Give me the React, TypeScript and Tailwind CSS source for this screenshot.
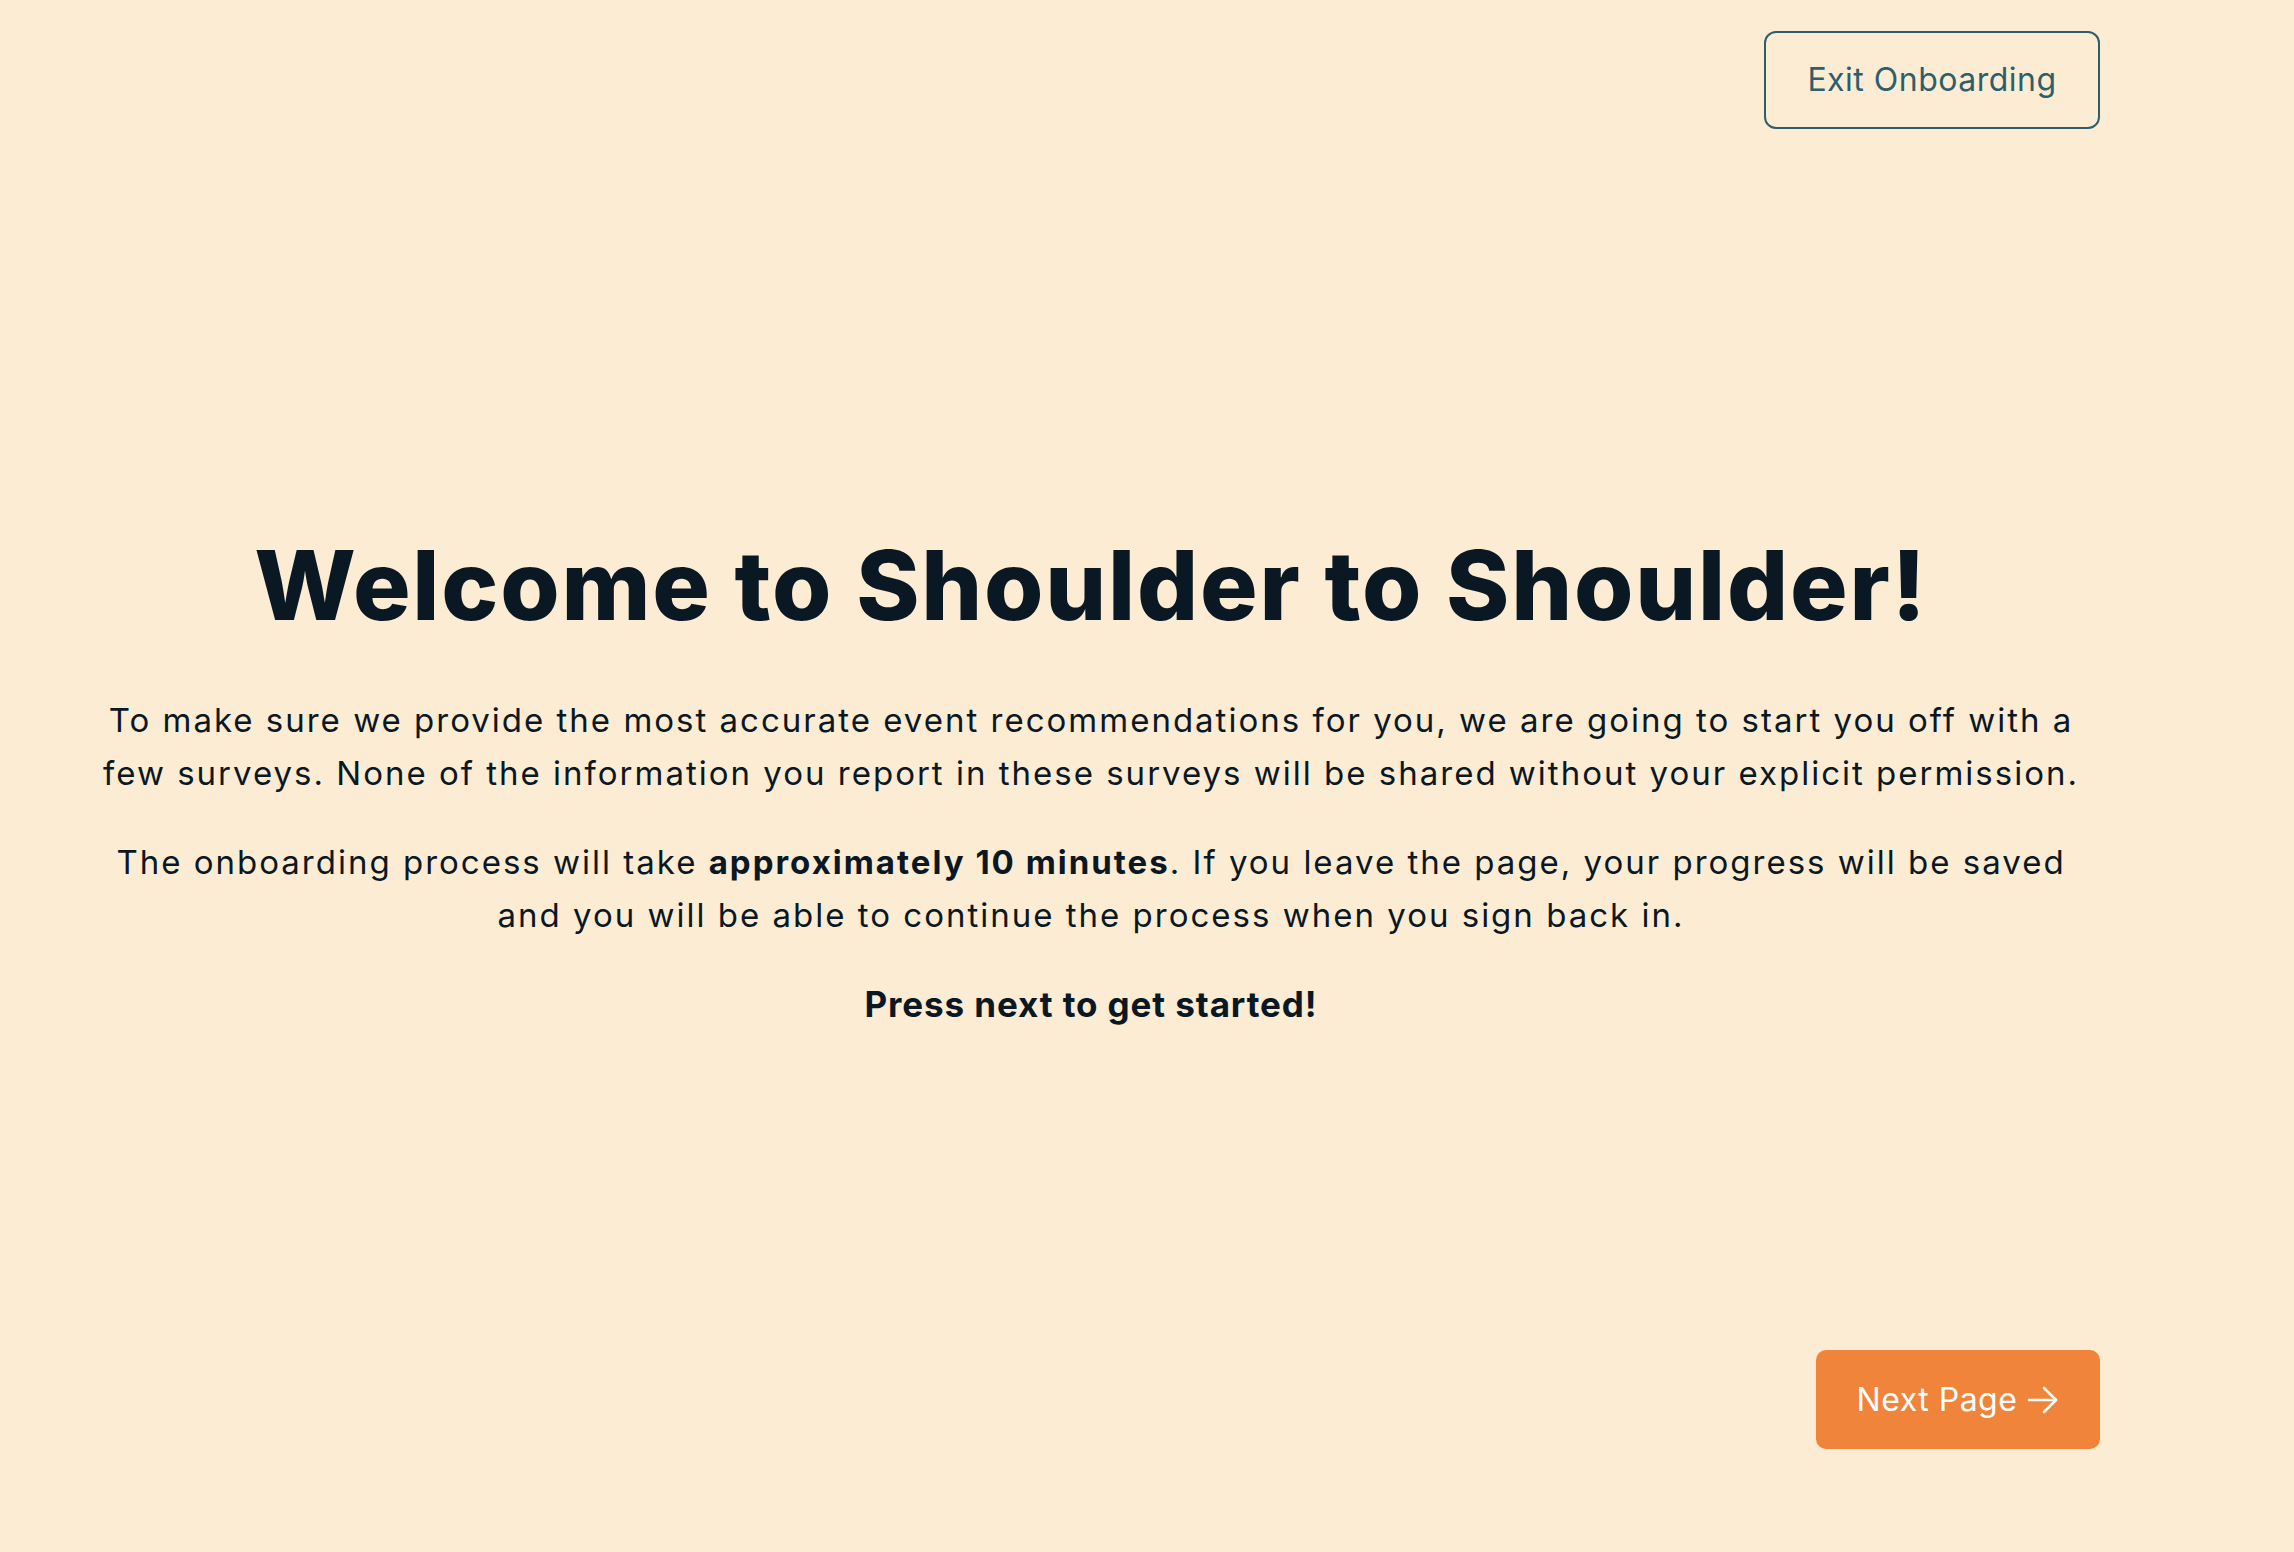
import React from "react";

export default function App() {
  return (
    <div
      className="flex h-[1552px] w-full flex-col bg-[#fdecd4] pl-[82px] pr-[194px] text-[#0a1824]"
      style={{ fontFamily: "Inter, 'Open Sans', sans-serif" }}
    >
      <header className="flex justify-end pt-[31px]">
        <button className="flex h-[98px] w-[336px] items-center justify-center rounded-[12px] border-2 border-[#2c5f6b] text-[32px] tracking-[0.5px] text-[#2c5f6b]">
          Exit Onboarding
        </button>
      </header>

      <main className="flex flex-1 flex-col items-center justify-center pt-[80px] text-center">
        <h1 className="text-[96px] font-extrabold leading-[1.2] tracking-[1.8px]">
          Welcome to Shoulder to Shoulder!
        </h1>
        <p className="mt-[50px] text-[33px] leading-[53px] tracking-[2px]">
          To make sure we provide the most accurate event recommendations for you, we are going to start you off with a
          <br />
          few surveys. None of the information you report in these surveys will be shared without your explicit permission.
        </p>
        <p className="mt-[36px] text-[33px] leading-[53px] tracking-[2px]">
          The onboarding process will take <span className="font-bold">approximately 10 minutes</span>. If you leave the page, your progress will be saved
          <br />
          and you will be able to continue the process when you sign back in.
        </p>
        <p className="mt-[36px] text-[35px] font-bold leading-[53px] tracking-[0.9px]">Press next to get started!</p>
      </main>

      <footer className="flex justify-end pb-[103px]">
        <button className="flex h-[99px] w-[284px] items-center justify-center gap-[10px] rounded-[10px] bg-[#f0843a] text-[32px] tracking-[0.5px] text-white">
          <span>Next Page</span>
          <svg width="32" height="28" viewBox="0 0 32 28" fill="none" stroke="white" strokeWidth="2.6" strokeLinecap="round" strokeLinejoin="round">
            <path d="M2 14h27" />
            <path d="M17 2l12 12-12 12" />
          </svg>
        </button>
      </footer>
    </div>
  );
}
